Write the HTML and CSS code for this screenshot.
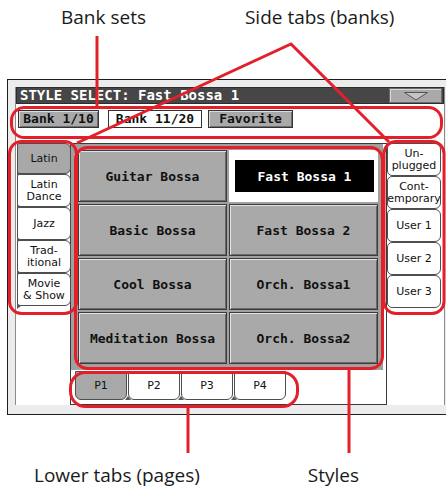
FILE: index.html
```html
<!DOCTYPE html>
<html>
<head>
    <title>Style Select</title>
    <link rel="stylesheet" href="styles.css">
</head>
<body>
    <div class="labels-top">
        <span class="label label-banksets">Bank sets</span>
        <span class="label label-sidetabs">Side tabs (banks)</span>
    </div>

    <div class="screen">
        <div class="screen-inner">
            <div class="title-bar">
                <span class="title-text">STYLE SELECT: Fast Bossa 1</span>
                <span class="drop-btn">
                    <svg width="26" height="10" viewBox="0 0 26 10">
                        <path d="M1.5 1.5 L24.5 1.5 L13 9 Z" fill="#c4c4c4" stroke="#555" stroke-width="1"/>
                    </svg>
                </span>
            </div>

            <!-- bank sets row -->
            <div class="bank-row">
                <span class="bank-btn bank-a">Bank 1/10</span>
                <span class="bank-btn bank-b active">Bank 11/20</span>
                <span class="bank-btn bank-c">Favorite</span>
            </div>

            <div class="main-area">
                <div class="side-col left-col">
                    <div class="side-tab selected"><span>Latin</span></div>
                    <div class="side-tab"><span>Latin<br>Dance</span></div>
                    <div class="side-tab"><span>Jazz</span></div>
                    <div class="side-tab"><span>Trad-<br>itional</span></div>
                    <div class="side-tab"><span>Movie<br>&amp; Show</span></div>
                </div>

                <div class="center-box">
                    <div class="style-panel">
                        <div class="style-btn">Guitar Bossa</div>
                        <div class="style-btn current"><span class="current-name">Fast Bossa 1</span></div>
                        <div class="style-btn">Basic Bossa</div>
                        <div class="style-btn">Fast Bossa 2</div>
                        <div class="style-btn">Cool Bossa</div>
                        <div class="style-btn">Orch. Bossa1</div>
                        <div class="style-btn">Meditation Bossa</div>
                        <div class="style-btn">Orch. Bossa2</div>
                    </div>
                    <div class="page-tabs">
                        <div class="page-tab selected">P1</div>
                        <div class="page-tab">P2</div>
                        <div class="page-tab">P3</div>
                        <div class="page-tab">P4</div>
                    </div>
                </div>

                <div class="side-col right-col">
                    <div class="side-tab"><span>Un-<br>plugged</span></div>
                    <div class="side-tab"><span class="wide">Cont-<br>emporary</span></div>
                    <div class="side-tab"><span>User 1</span></div>
                    <div class="side-tab"><span>User 2</span></div>
                    <div class="side-tab"><span>User 3</span></div>
                </div>
            </div>
        </div>
    </div>

    <div class="labels-bottom">
        <span class="label label-lower">Lower tabs (pages)</span>
        <span class="label label-styles">Styles</span>
    </div>

    <!-- red callouts drawn over the screen -->
    <svg class="callouts" width="446" height="488" viewBox="0 0 446 488">
        <g fill="none" stroke="#e3202a" stroke-width="3">
            <line x1="97" y1="36" x2="97" y2="107"/>
            <polyline points="77,143 291,44 389,142" stroke-linejoin="miter"/>
            <line x1="188" y1="407" x2="188" y2="453"/>
            <line x1="349" y1="369" x2="349" y2="453"/>
            <rect x="11.5" y="107.5" width="430" height="30" rx="13"/>
            <rect x="9.5" y="141.5" width="67" height="172" rx="12"/>
            <rect x="75.5" y="147.5" width="307" height="221" rx="12"/>
            <rect x="70.5" y="372.5" width="227" height="34" rx="15"/>
            <rect x="384" y="141.5" width="60" height="172" rx="12"/>
        </g>
    </svg>
</body>
</html>
```

FILE: styles.css
```css
body {
    margin: 0;
    width: 446px;
    height: 488px;
    overflow: hidden;
    position: relative;
    background-color: #ffffff;
    font-family: "DejaVu Sans", sans-serif;
}

/* annotation labels */
.label {
    font-family: "Open Sans", "DejaVu Sans", sans-serif;
    font-size: 19px;
    color: #1a1a1a;
    white-space: nowrap;
}

.labels-top {
    height: 79px;
    display: flex;
    align-items: flex-start;
    padding-left: 61px;
    box-sizing: border-box;
}

.labels-top .label {
    line-height: 26px;
    margin-top: 4px;
}

.label-sidetabs {
    margin-left: 99px;
}

.labels-bottom {
    display: flex;
    padding-left: 34px;
    margin-top: 47px;
}

.labels-bottom .label {
    line-height: 26px;
}

.label-styles {
    margin-left: 108px;
}

.callouts {
    position: absolute;
    top: 0;
    left: 0;
    pointer-events: none;
}

/* the display screen */
.screen {
    margin-left: 7px;
    width: 450px;
    border: 1px solid #1e1e1e;
    background-color: #ececec;
    padding: 7px 0 9px 7px;
    box-sizing: border-box;
}

.screen-inner {
    width: 428px;
    background-color: #ffffff;
    border-left: 1px solid #8c8c8c;
    border-right: 1px solid #8c8c8c;
}

.title-bar {
    height: 17px;
    background-color: #464646;
    border: 1px solid #2c2c2c;
    box-sizing: border-box;
    display: flex;
    align-items: center;
    justify-content: space-between;
    padding: 0 1px 0 3px;
}

.title-text {
    font-family: "DejaVu Sans Mono", monospace;
    font-weight: bold;
    font-size: 14px;
    color: #ffffff;
    line-height: 15px;
}

.drop-btn {
    width: 53px;
    height: 15px;
    background-color: #a9a9a9;
    border: 1px solid #6a6a6a;
    box-shadow: inset 1px 1px 0 #d8d8d8;
    box-sizing: border-box;
    display: flex;
    align-items: center;
    justify-content: center;
}

.drop-btn svg {
    display: block;
}

/* bank buttons */
.bank-row {
    display: flex;
    margin: 6px 0 15px 2px;
    height: 18px;
}

.bank-btn {
    height: 18px;
    box-sizing: border-box;
    background-color: #a9a9a9;
    border: 1px solid #333333;
    box-shadow: inset 1px 1px 0 #dcdcdc, inset -1px -1px 0 #6e6e6e;
    font-family: "DejaVu Sans Mono", monospace;
    font-weight: bold;
    font-size: 13px;
    line-height: 16px;
    color: #111111;
    text-align: center;
}

.bank-a {
    width: 81px;
}

.bank-b {
    width: 94px;
    margin-left: 9px;
}

.bank-c {
    width: 85px;
    margin-left: 6px;
}

.bank-btn.active {
    background-color: #ffffff;
    box-shadow: none;
}

/* main area */
.main-area {
    display: flex;
    height: 262px;
}

.side-col {
    width: 55px;
    display: flex;
    flex-direction: column;
}

.side-tab {
    position: relative;
    height: 33px;
    box-sizing: border-box;
    border: 1px solid #4e4e4e;
    background-color: #ffffff;
    display: flex;
    align-items: center;
    justify-content: center;
    font-size: 11px;
    line-height: 12px;
    color: #111111;
    text-align: center;
}

.left-col .side-tab {
    border-radius: 2px 6px 6px 0;
    margin-left: 1px;
}

.right-col .side-tab {
    border-radius: 5px 6px 6px 5px;
    margin-right: 1px;
}

.side-tab.selected {
    background-color: #a8a8a8;
    height: 31px;
}

.left-col .side-tab::before {
    content: "";
    position: absolute;
    left: -1px;
    bottom: -4px;
    border-top: 3px solid transparent;
    border-bottom: 3px solid transparent;
    border-left: 4px solid #5a5a5a;
}

.side-tab .wide {
    margin: 0 -4px;
}

.center-box {
    width: 317px;
    box-sizing: border-box;
    border: 1px solid #3a3a3a;
    display: flex;
    flex-direction: column;
    margin-left: -1px;
}

.style-panel {
    background-color: #a0a0a0;
    padding: 6px 8px 6px 7px;
    display: grid;
    grid-template-columns: 149px 149px;
    grid-auto-rows: 52px;
    gap: 2px;
    border-right: 3px solid #ffffff;
}

.style-btn {
    box-sizing: border-box;
    background-color: #a9a9a9;
    border: 1px solid #3c3c3c;
    box-shadow: inset 1px 1px 0 #e2e2e2, inset -1px -1px 0 #6a6a6a;
    display: flex;
    align-items: center;
    justify-content: center;
    font-family: "DejaVu Sans Mono", monospace;
    font-weight: bold;
    font-size: 13px;
    color: #111111;
    white-space: nowrap;
}

.style-btn.current {
    background-color: #ffffff;
    border-color: #ffffff;
    box-shadow: none;
    justify-content: flex-start;
    padding-left: 5px;
}

.current-name {
    width: 139px;
    height: 32px;
    background-color: #000000;
    color: #ffffff;
    display: flex;
    align-items: center;
    justify-content: center;
}

.page-tabs {
    flex: 1;
    display: flex;
    gap: 1px;
    padding-left: 4px;
    background-color: #ffffff;
}

.page-tab {
    position: relative;
    width: 52px;
    height: 29px;
    margin-top: 1px;
    box-sizing: border-box;
    border: 1px solid #4e4e4e;
    border-radius: 0 0 6px 6px;
    background-color: #ffffff;
    display: flex;
    align-items: center;
    justify-content: center;
    font-size: 11px;
    color: #111111;
}

.page-tab.selected {
    background-color: #a8a8a8;
}

.page-tab + .page-tab::before {
    content: "";
    position: absolute;
    left: -4px;
    bottom: -1px;
    border-left: 3px solid transparent;
    border-right: 3px solid transparent;
    border-bottom: 4px solid #5a5a5a;
}
```
